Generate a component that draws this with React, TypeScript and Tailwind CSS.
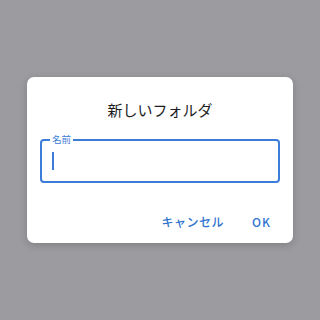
import React from 'react';

const font = { fontFamily: '"Noto Sans CJK JP", "Noto Sans", sans-serif' };

export default function App() {
  return (
    <div className="w-[320px] h-[320px] bg-[#9b9ba0] flex items-center justify-center" style={font}>
      <div className="w-[266px] h-[166px] bg-white rounded-[7px] shadow-[0_2px_8px_rgba(0,0,0,0.18)] flex flex-col">
        <h2 className="pt-[22px] text-center text-[15px] leading-[22px] text-[#1c1c1e]">新しいフォルダ</h2>

        <div className="mx-[13px] mt-[18px] relative h-[44px] border-2 border-[#3b7dd8] rounded-[4px]">
          <span className="absolute -top-[8px] left-[8px] px-[2px] bg-white text-[9.5px] leading-[13px] text-[#3b7dd8]">
            名前
          </span>
          <div className="absolute left-[10px] top-[11px] w-[1.5px] h-[18px] bg-[#3b7dd8]" />
        </div>

        <div className="mt-auto mb-[13px] flex justify-end items-center gap-[28px] pr-[22px] text-[12px] leading-[16px] font-medium text-[#2f74d0]">
          <button className="tracking-[0.5px]">キャンセル</button>
          <button className="tracking-[1px]">OK</button>
        </div>
      </div>
    </div>
  );
}
